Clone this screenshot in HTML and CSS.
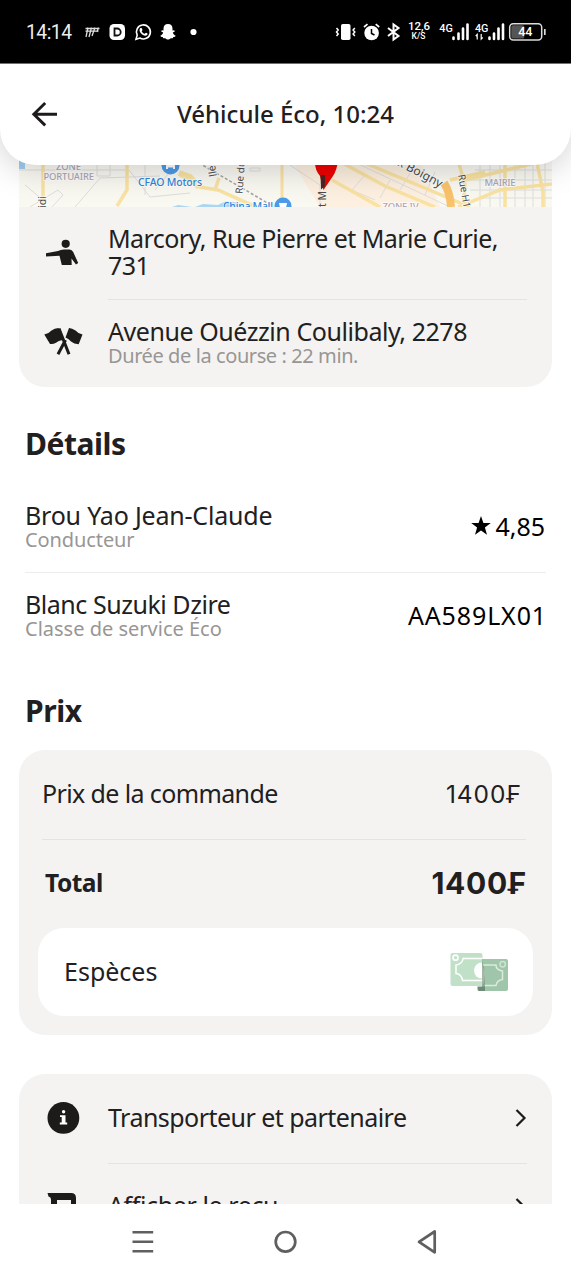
FILE: index.html
```html
<!DOCTYPE html>
<html lang="fr">
<head>
<meta charset="utf-8">
<title>Véhicule Éco, 10:24</title>
<link rel="stylesheet" href="styles.css">
</head>
<body>
<div class="status">
  <span class="clock">14:14</span>
  <svg class="status-left" width="123" height="64" viewBox="80 0 123 64">
    <g stroke="#ddd" stroke-width="1.3" fill="none"><path d="M85.500 28.500H99.500M85.500 31.200H98.500M88 27.500L86 37M91.500 27.500L89 37M95 27.500L92 36M98.500 27.500L97 32"/></g>
    <rect x="109.500" y="24" width="15.500" height="16" rx="4.500" fill="#fff"/>
    <path d="M114.500 28.500h2.700a3.500 3.500 0 0 1 0 7H114.500z" fill="none" stroke="#111" stroke-width="1.800"/>
    <path d="M136 39.200l1.200-4a7 7 0 1 1 2.700 2.800z" fill="none" stroke="#fff" stroke-width="1.600"/>
    <path d="M140 28.500c1-1.300 1.800-.6 2.400 1.200.2.700-.9 1.100-.6 1.700.6 1.100 1.500 1.900 2.600 2.300.7.200 1.100-1.200 1.700-1 1.700.7 1.900 1 1.200 2-1.500 2-4.700.5-6.200-1.200-1.300-1.500-2.200-3.600-1.100-5z" fill="#fff"/>
    <path d="M168 24c3 0 4.500 2 4.500 4.500v2l1.800-.3.500 1.300-2 1c.6 1.800 1.600 2.700 2.900 3.200-.2 1-1.200 1.200-2.400 1.400l-.5 1.200-2-.1c-1 .9-1.700 1.200-2.800 1.200s-1.800-.3-2.800-1.200l-2 .1-.5-1.200c-1.200-.2-2.200-.4-2.400-1.400 1.300-.5 2.300-1.400 2.900-3.200l-2-1 .5-1.300 1.800.3v-2C163.500 26 165 24 168 24z" fill="#fff"/>
    <circle cx="193.500" cy="32" r="3.100" fill="#fff"/>
  </svg>
  <svg class="status-right" width="241" height="64" viewBox="330 0 241 64">
    <rect x="341" y="24" width="9.500" height="16" rx="1.800" fill="#fff"/>
    <path d="M336.500 28l1.700 2-1.700 2 1.700 2-1.700 2M354.800 28l-1.700 2 1.700 2-1.700 2 1.700 2" fill="none" stroke="#fff" stroke-width="1.500"/>
    <circle cx="371.600" cy="33" r="7.300" fill="#fff"/>
    <path d="M371.500 29v4.500l3 1.500" fill="none" stroke="#000" stroke-width="1.500"/>
    <path d="M364 27l3.500-2.800M379.200 27l-3.500-2.800" stroke="#fff" stroke-width="1.700"/>
    <path d="M388 28l10.500 8-5 3.500v-15l5 3.500L388 36" fill="none" stroke="#fff" stroke-width="2"/>
    <g fill="#fff" font-family="Roboto, sans-serif" font-weight="500" text-anchor="middle">
      <text x="419" y="30" font-size="11.500">12,6</text>
      <text x="418.500" y="39" font-size="8.500">K/S</text>
      <text x="446" y="32" font-size="10.800">4G</text>
      <text x="481.700" y="31.500" font-size="10.800">4G</text>
    </g>
    <path d="M453.500 37.500v1.500M458.500 33.500v5.500M463 28.500v10.500M467.500 24.500v14.500M489.500 37.500v1.500M494 33.500v5.500M498.500 28.500v10.500M503 24.500v14.500" stroke="#fff" stroke-width="2.600" stroke-linecap="round"/>
    <path d="M477.200 39.500v-5l-1.500 1.500M481.200 34v5l1.500-1.500" fill="none" stroke="#fff" stroke-width="1.200"/>
    <rect x="509.700" y="23.700" width="32" height="16.400" rx="3.500" fill="#000" stroke="#ddd" stroke-width="1.500"/>
    <rect x="511.300" y="25.300" width="13" height="13.200" rx="1.500" fill="#555"/>
    <text x="525.300" y="36.300" font-size="12.500" font-weight="500" fill="#fff" font-family="Roboto, sans-serif" text-anchor="middle">44</text>
    <path d="M544.800 29v6" stroke="#ddd" stroke-width="1.700"/>
  </svg>
</div>

<header class="header">
  <svg class="back" width="28" height="28" viewBox="31 100 28 28"><path d="M57 114.200H34M45.200 103L33.800 114.200L45.200 125.400" fill="none" stroke="#1c1b1a" stroke-width="2.900"/></svg>
  <h1 class="title">Véhicule Éco, 10:24</h1>
</header>

<main class="content">
  <section class="card route">
    <svg class="map" width="533" height="78" viewBox="19 129 533 78">
      <rect x="19" y="129" width="533" height="78" fill="#f9f8f1"/>
      <path d="M330 129L420 160L440 207H320L285 150z" fill="#fdf0e0"/>
      <path d="M19 129h6v40h-6z" fill="#9fcdf0"/>
      <path d="M195 207l8-3 15 1 8-4 15 2 3 4zM172 207l6-2 14 2z" fill="#abd5f1"/>
      <g fill="none" stroke="#dedfdd" stroke-width="1">
        <path d="M19 170H43M43 170H125M25 185L43 200M30 207L58 190L63 195L52 207M75 207L100 178L160 176M97 160V176H110V160M129 170L150 197L190 193M145 150V195M155 190L180 160M250 168h10v3h-10zM290 165L320 185V207"/>
        <path d="M350 160L450 207M340 185L375 200M365 175L352 190M390 180L380 198M415 165L400 190M435 172L425 195M475 170H552M465 180H552M470 190H552M478 198H552M480 160V207M490 160V207M500 160V207M515 160V207M525 160V207M533 160V207M545 160V207"/>
      </g>
      <g fill="none" stroke="#f9e2a2" stroke-width="3.500">
        <path d="M43 160V207M127 160V190L117 206M179 174L200 187L218 190L256 207M219 178L215 190"/>
        <path d="M337 160L385 186L435 207M332 180L380 207M365 163L470 207M458 160L465 185L463 207M458 207L500 190L552 184M465 180L552 159M505 207V163M537 163L543 192V207M450 180L485 172"/>
      </g>
      <path d="M179 173L190 177L199 187" fill="none" stroke="#f9e2a2" stroke-width="6"/>
      <path d="M282 160V207" stroke="#f9e2a2" stroke-width="3"/>
      <path d="M444 183Q450 192 451 207" fill="none" stroke="#f9c36c" stroke-width="8"/>
      <path d="M199 163L271 205" stroke="#a5a5a3" stroke-width="1.500" stroke-dasharray="3 2"/>
      <circle cx="170.500" cy="165.500" r="9" fill="#4b9be9"/>
      <path d="M166 169v-5l2-2h5l2 2v5h-2v-1.500h-5v1.500z" fill="#fff"/>
      <circle cx="283" cy="206" r="8.500" fill="#4b9be9"/>
      <path d="M279 203h8l-1 5h-6z" fill="#fff"/>
      <g font-family="'Noto Sans', sans-serif" stroke="#fff" stroke-width="2" paint-order="stroke" stroke-opacity=".7">
        <g font-size="9.500" fill="#aaa6b5" font-weight="500">
          <text x="56" y="169.500" textLength="25">ZONE</text>
          <text x="43.500" y="179.800" textLength="50.500">PORTUAIRE</text>
          <text x="484.500" y="186" textLength="31">MAIRIE</text>
          <text x="382.500" y="209.500" textLength="36">ZONE IV</text>
        </g>
        <g font-size="10.500" fill="#2f86db" font-weight="500">
          <text x="138" y="186" textLength="64">CFAO Motors</text>
          <text x="223" y="210" textLength="50">China Mall</text>
        </g>
        <g font-size="10.500" fill="#4a4a4a">
          <text transform="translate(46 208) rotate(-90)">idi</text>
          <text transform="translate(217 176) rotate(-100)">lle</text>
          <text transform="translate(242.500 194) rotate(-86)" font-size="10">Rue du</text>
          <text transform="translate(458 175) rotate(80)" font-size="10">Rue H1</text>
          <text x="397" y="165" font-size="12" transform="rotate(28 397 165)">x Boigny</text>
        </g>
      </g>
      <path d="M315 160H338Q337 170 333 176L323.500 190L320 176Q315 170 315 163z" fill="#ee0202"/>
      <path d="M320.500 175h4.500v11l-4 3.500z" fill="#4e2522"/>
      <text font-size="10.500" fill="#4a4a4a" font-family="'Noto Sans', sans-serif" transform="translate(325.500 207) rotate(-90)">t M</text>
    </svg>
    <div class="row pickup">
      <svg class="row-icon" width="38" height="32" viewBox="44 237 38 32"><circle cx="65.700" cy="243.800" r="4.100" fill="#1c1b1a"/><path d="M46 253.200L58 251Q60.500 249.500 64 249.500H69.500Q72 249.500 73.200 252L78.200 263L76 264.500L71.500 258.500L71.700 265H61.800L59.500 255.800L46 256.500z" fill="#1c1b1a"/></svg>
      <div class="row-text"><span class="from">Marcory, Rue Pierre et Marie Curie,</span><br><span class="from">731</span></div>
    </div>
    <div class="row dest">
      <svg class="row-icon" width="40" height="32" viewBox="43 326 40 32"><path d="M44.300 335.500Q49 334.500 51.500 331.500Q54.500 329.200 58.500 329L64 341Q59 341 56.500 343.500Q53 345.500 50 345zM82.500 335.500Q78 334.500 75.500 331.500Q72 329.200 69 329L65.500 338.500Q69 340 71 342.500Q74 345 78.700 345.200z" fill="#1c1b1a"/><path d="M59 329.500L69 355.300M65.500 341L58 355.300" stroke="#1c1b1a" stroke-width="3"/></svg>
      <div class="row-text"><div class="name to">Avenue Ouézzin Coulibaly, 2278</div><div class="sub duration">Durée de la course : 22 min.</div></div>
    </div>
  </section>

  <h2 class="heading details-h">Détails</h2>
  <section class="details">
    <div class="detail driver">
      <div><div class="name driver-name">Brou Yao Jean-Claude</div><div class="sub role">Conducteur</div></div>
      <div class="value rating"><svg class="star" width="20" height="20" viewBox="0 0 20 20"><path d="M10 0l2.400 6.900 7.400.2-5.900 4.500 2.100 7.100-6-4.200-6 4.200 2.100-7.100L.2 7.100l7.400-.2z"/></svg><span>4,85</span></div>
    </div>
    <div class="detail vehicle">
      <div><div class="name car">Blanc Suzuki Dzire</div><div class="sub">Classe de service Éco</div></div>
      <div class="value plate">AA589LX01</div>
    </div>
  </section>

  <h2 class="heading price-h">Prix</h2>
  <section class="card price">
    <div class="price-row order"><span class="order-label">Prix de la commande</span><span class="amount">1400₣</span></div>
    <div class="price-row total"><span class="total-label">Total</span><span class="total-amount">1400₣</span></div>
    <div class="payment"><span>Espèces</span>
      <svg class="cash" width="60" height="42" viewBox="449 951 60 42">
        <rect x="450.500" y="953" width="32" height="33" rx="2" fill="#c0e0c8"/>
        <path d="M482.500 958.500H463C463 962 459.500 965 456 965V973.500C459.500 973.500 462.500 977 462.500 980.500H482.500" fill="none" stroke="#fff" stroke-width="1.500"/>
        <circle cx="455.500" cy="957.700" r="2.500" fill="none" stroke="#fff" stroke-width="1.700"/>
        <path d="M482 962.500a8 8 0 0 0 0 16z" fill="#fff"/>
        <path d="M482 959h24a2 2 0 0 1 2 2v28a2 2 0 0 1-2 2h-24z" fill="#9fc5aa"/>
        <path d="M482 965H496C496 968.500 499 970.500 502.500 971V979.500C499 980 496.500 982.500 496 985.500H484" fill="none" stroke="#dcebdc" stroke-width="1.500"/>
        <circle cx="502.700" cy="964.200" r="2.700" fill="none" stroke="#d0e3d2" stroke-width="1.500"/>
        <path d="M482 965Q486 972 484.500 980L482 987z" fill="#e1ebdf"/>
        <path d="M482 960Q485 968 485 977V991H482z" fill="#6f8d77" opacity=".55"/>
        <path d="M477.500 986.500H485V991H479Q477.500 991 477.500 989z" fill="#6f8b77"/>
      </svg>
    </div>
  </section>

  <section class="card links">
    <div class="row link">
      <svg class="row-icon" width="38" height="34" viewBox="44 1101 38 34"><circle cx="63.400" cy="1117.900" r="15.900" fill="#1c1b1a"/><circle cx="63.600" cy="1111.700" r="1.700" fill="#fff"/><path d="M60 1115.200H65.500V1122.500H67.200V1124.500H59.800V1122.500H61.700V1117H60z" fill="#fff"/></svg>
      <div class="row-text"><div class="name carrier">Transporteur et partenaire</div></div>
      <svg class="chev" width="12" height="20" viewBox="0 0 12 20"><path d="M1.500 2L9.500 10L1.500 18" fill="none" stroke="#1c1b1a" stroke-width="2.200"/></svg>
    </div>
    <div class="row link">
      <svg class="row-icon" width="38" height="34" viewBox="44 1190 38 34"><path d="M47.500 1193H71Q76 1193 76 1198V1222H51V1199.500Q51 1197 48.500 1196.500zM57 1200V1216H71V1200z" fill="#1c1b1a" fill-rule="evenodd"/></svg>
      <div class="row-text"><div class="name receipt">Afficher le reçu</div></div>
      <svg class="chev" width="12" height="20" viewBox="0 0 12 20"><path d="M1.500 2L9.500 10L1.500 18" fill="none" stroke="#1c1b1a" stroke-width="2.200"/></svg>
    </div>
  </section>
</main>

<nav class="navbar">
  <svg width="24" height="26" viewBox="131 1229 24 26"><path d="M132.500 1232.300h20.700M132.500 1241.800h20.700M132.500 1251.300h20.700" stroke="#5f5f5f" stroke-width="2.600"/></svg>
  <svg width="26" height="26" viewBox="272 1229 26 26"><circle cx="285.500" cy="1241.800" r="9.800" fill="none" stroke="#5f5f5f" stroke-width="2.700"/></svg>
  <svg width="24" height="26" viewBox="415 1229 24 26"><path d="M434.700 1231.500V1252.300L419 1241.900z" fill="none" stroke="#5f5f5f" stroke-width="2.700" stroke-linejoin="round"/></svg>
</nav>
</body>
</html>
```
FILE: styles.css
```css
* { box-sizing: border-box; }

body {
  margin: 0;
  width: 571px;
  height: 1280px;
  overflow: hidden;
  display: flex;
  flex-direction: column;
  background: #fff;
  color: #21201f;
  font-family: "Noto Sans", "Open Sans", sans-serif;
  font-size: 25px;
  line-height: 27px;
  white-space: nowrap;
}

svg { display: block; flex: none; }
h1, h2 { margin: 0; }

.status {
  flex: none;
  height: 64px;
  display: flex;
  align-items: center;
  background: #000;
  border-bottom: 1px solid #777;
  color: #eee;
}
.clock {
  width: 54px;
  margin-left: 26px;
  padding-top: 2px;
  font: 19.300px/24px Roboto, sans-serif;
  letter-spacing: -.5px;
}
.status-right { margin-left: auto; }

.header {
  flex: none;
  position: relative;
  z-index: 1;
  height: 101px;
  display: flex;
  align-items: center;
  padding: 0 31px 2px;
  background: #fff;
  border-radius: 0 0 36px 36px;
  box-shadow: 0 4px 34px rgba(0, 0, 0, .19);
}
.title {
  flex: 1;
  margin-right: 28px;
  text-align: center;
  font-size: 24px;
  font-weight: 500;
}

.content {
  height: 1075px;
  flex: none;
  margin-top: -36px;
  overflow: hidden;
}
.card {
  margin: 0 19px;
  background: #f4f3f1;
  border-radius: 26px;
}
.route { height: 258px; border-radius: 0 0 26px 26px; }
.row { display: flex; }
.row-icon { margin-left: 25px; }
.pickup { height: 92px; padding-top: 18px; }
.pickup .row-icon { margin-top: 12px; margin-right: 26px; }
.pickup .row-text { height: 75px; width: 419px; border-bottom: 1px solid #e4e3e1; }
.dest { height: 88px; padding-top: 18px; }
.dest .row-icon { margin-left: 24px; margin-top: 8px; margin-right: 25px; }
.name { padding-top: 1px; }
.sub {
  color: #989694;
  font-size: 20px;
  line-height: 22px;
}
.from { letter-spacing: -.56px; }
.to { letter-spacing: -.44px; }
.duration { letter-spacing: -.41px; }
.driver-name { letter-spacing: -.2px; }
.role { letter-spacing: -.1px; }
.car { letter-spacing: -.46px; }
.order-label { letter-spacing: -.62px; }
.total-label { letter-spacing: -.5px; }
.carrier { letter-spacing: -.54px; }
.receipt { letter-spacing: -.4px; }

.heading {
  padding-left: 25px;
  font-size: 30px;
  line-height: 36px;
  font-weight: 700;
  letter-spacing: -.45px;
}
.details-h { margin-top: 39px; }
.details { margin: 39px 25px 0; }
.detail { display: flex; justify-content: space-between; }
.driver { border-bottom: 1px solid #ededed; height: 72px; }
.vehicle { padding-top: 17px; height: 89px; }
.value { display: flex; align-items: center; height: 27px; margin-top: 12px; color: #000; }
.rating { margin-right: 1px; }
.plate { letter-spacing: .88px; margin-right: -1px; }
.star { margin: -2px 4px 0 0; }

.price-h { margin-top: 31px; }
.price { height: 285px; margin-top: 21px; padding: 30px 19px 0; }
.price-row { display: flex; justify-content: space-between; }
.order { height: 60px; margin: 0 7px 0 4px; border-bottom: 1px solid #e4e3e1; }
.amount {
  margin-right: 4px;
  padding-top: 1px;
  font-family: Inter, "Noto Sans", sans-serif;
  font-size: 24.500px;
  letter-spacing: .9px;
}
.total { height: 88px; margin: 0 7px; padding-top: 29px; font-weight: 700; font-size: 24.500px; }
.total-amount {
  margin-right: -1px;
  padding-top: 1px;
  font-family: Inter, "Noto Sans", sans-serif;
  font-size: 30px;
  letter-spacing: .7px;
}
.payment {
  height: 88px;
  display: flex;
  align-items: center;
  justify-content: space-between;
  padding: 0 24px 0 26px;
  background: #fff;
  border-radius: 26px;
}
.payment span { margin-top: -2px; }

.links { height: 240px; margin-top: 39px; }
.link { height: 89px; padding-top: 27px; }
.link .row-icon { margin-right: 26px; }
.link .row-text { width: 419px; height: 63px; padding-top: 2px; border-bottom: 1px solid #e4e3e1; }
.link .receipt { padding-top: 0; }
.chev { margin: 7px 0 0 -12px; }

.navbar {
  flex: none;
  height: 76px;
  display: flex;
  align-items: center;
  padding: 0 132px 0 131px;
  justify-content: space-between;
  background: #fff;
}
```
